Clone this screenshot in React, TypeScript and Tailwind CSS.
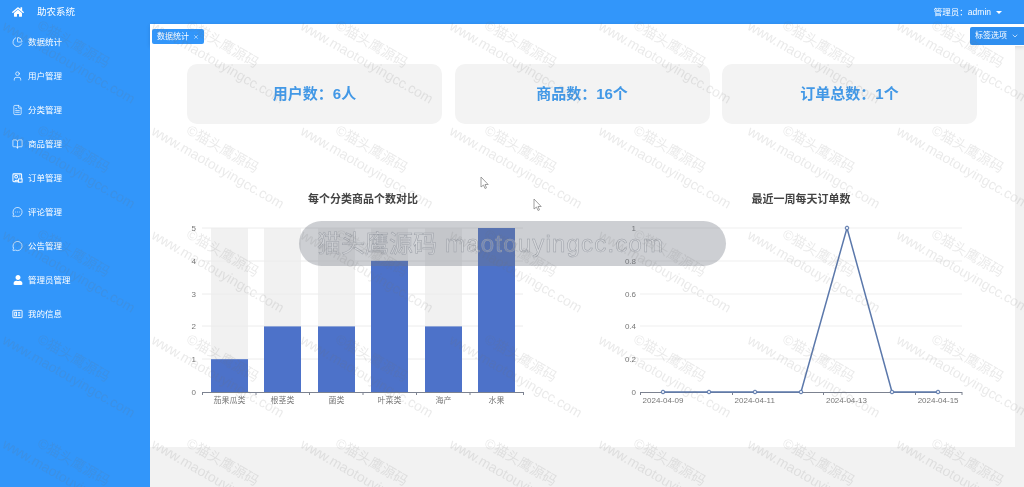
import React from 'react';
import { BookOpen, ChartPie, ChevronDown, FileText, MessageCircle, MessageCircleMore, User, X } from 'lucide-react';
import { FaHome, FaUser } from 'react-icons/fa';

const OrderIcon = () => (
  <svg width="12" height="12" viewBox="0 0 12 12" fill="none" stroke="currentColor" strokeWidth="1.1">
    <rect x="1" y="1.5" width="9.5" height="8.5" rx="1" />
    <circle cx="4.5" cy="4.6" r="1.5" />
    <path d="M3 10c0-1.8 4-2.500 5 0M8 3h1M8 5h1" />
    <rect x="7" y="7" width="4" height="3.500" fill="#3296fa" />
  </svg>
);

const InfoIcon = () => (
  <svg width="12" height="12" viewBox="0 0 12 12" fill="none" stroke="currentColor" strokeWidth="1">
    <rect x="1" y="2" width="10" height="8" rx="0.5" />
    <rect x="3" y="4" width="2" height="4" />
    <path d="M6.500 4.500h2.500M6.500 6h2.500M6.500 7.500h2.500" />
  </svg>
);

const menu = [
  { label: '数据统计', icon: <ChartPie size={12} strokeWidth={1.5} /> },
  { label: '用户管理', icon: <User size={12} strokeWidth={1.5} /> },
  { label: '分类管理', icon: <FileText size={12} strokeWidth={1.5} /> },
  { label: '商品管理', icon: <BookOpen size={12} strokeWidth={1.5} /> },
  { label: '订单管理', icon: <OrderIcon /> },
  { label: '评论管理', icon: <MessageCircleMore size={12} strokeWidth={1.5} /> },
  { label: '公告管理', icon: <MessageCircle size={12} strokeWidth={1.5} /> },
  { label: '管理员管理', icon: <FaUser size={10} /> },
  { label: '我的信息', icon: <InfoIcon /> },
];

const stats = ['用户数：6人', '商品数：16个', '订单总数：1个'];

const bars = [
  { name: '茄果瓜类', value: 1, x: 48 },
  { name: '根茎类', value: 2, x: 101 },
  { name: '菌类', value: 2, x: 155 },
  { name: '叶菜类', value: 4, x: 208 },
  { name: '海产', value: 2, x: 262 },
  { name: '水果', value: 5, x: 315 },
];

const linePoints: [number, number][] = [
  [62, 185],
  [108, 185],
  [154, 185],
  [200, 185],
  [246, 21],
  [291, 185],
  [337, 185],
];

const gridY = [21, 54, 87, 119, 152];

const BarChart = () => (
  <svg width="400" height="210" fontFamily="'Liberation Sans', 'Noto Sans CJK SC', sans-serif" fontSize="8">
    {bars.map((b) => (
      <g key={b.name}>
        <rect x={b.x} y="21" width="37" height="164" fill="#f1f1f1" />
      </g>
    ))}
    {gridY.map((y) => (
      <line key={y} x1="39" x2="360" y1={y} y2={y} stroke="#ececec" />
    ))}
    {bars.map((b) => (
      <g key={b.name}>
        <rect x={b.x} y={185 - b.value * 32.8} width="37" height={b.value * 32.8} fill="#4d72c9" />
        <text x={b.x + 18.5} y="196" textAnchor="middle" fill="#777">{b.name}</text>
      </g>
    ))}
    <line x1="39" x2="360" y1="185.500" y2="185.500" stroke="#7c8290" />
    {[0, 1, 2, 3, 4, 5, 6].map((i) => (
      <line key={i} x1={39.5 + i * 53.5} x2={39.5 + i * 53.5} y1="185" y2="188" stroke="#7c8290" />
    ))}
    {[0, 1, 2, 3, 4, 5].map((v) => (
      <text key={v} x="33" y={188 - v * 32.8} textAnchor="end" fill="#777">{v}</text>
    ))}
  </svg>
);

const LineChart = () => (
  <svg width="400" height="210" fontFamily="'Liberation Sans', 'Noto Sans CJK SC', sans-serif" fontSize="8">
    {gridY.map((y) => (
      <line key={y} x1="39" x2="361" y1={y} y2={y} stroke="#efefef" />
    ))}
    <line x1="39" x2="361" y1="185.500" y2="185.500" stroke="#7c8290" />
    {[39.5, 131.5, 222.5, 314.5, 361].map((x) => (
      <line key={x} x1={x} x2={x} y1="185" y2="188" stroke="#7c8290" />
    ))}
    <polyline points={linePoints.map((p) => p.join(',')).join(' ')} fill="none" stroke="#5b78ab" strokeWidth="1.500" />
    {linePoints.map(([x, y]) => (
      <circle key={x} cx={x} cy={y} r="1.800" fill="#dfe6f3" stroke="#5b78ab" />
    ))}
    {['2024-04-09', '2024-04-11', '2024-04-13', '2024-04-15'].map((d, i) => (
      <text key={d} x={62 + i * 91.7} y="196" textAnchor="middle" fill="#777">{d}</text>
    ))}
    {['0', '0.2', '0.4', '0.6', '0.8', '1'].map((v, i) => (
      <text key={v} x="35" y={188 - i * 32.8} textAnchor="end" fill="#777">{v}</text>
    ))}
  </svg>
);

const Cursor = ({ className }: { className: string }) => (
  <svg className={className} width="10" height="14" viewBox="0 0 10 14" fill="#fff" stroke="#888" strokeWidth="0.8">
    <path d="M1 1v10l2.500-2 1.500 3.500 1.500-.7L5 8.500h3.200z" />
  </svg>
);

const App: React.FC = () => {
  return (
    <div className="relative flex h-screen flex-col overflow-hidden bg-[#f2f2f2] font-['Liberation_Sans','Noto_Sans_CJK_SC',sans-serif] blur-[0.4px]">
      <header className="flex h-6 shrink-0 items-center bg-[#3296fa] pl-[12px] pr-[22px] text-white">
        <FaHome size={12} />
        <span className="ml-[13px] text-[9.5px]">助农系统</span>
        <span className="ml-auto text-[8.5px]">管理员：admin</span>
        <span className="ml-[5px] h-0 w-0 border-x-[3px] border-t-[3px] border-x-transparent border-t-white" />
      </header>

      <div className="flex min-h-0 flex-1">
        <aside className="w-[150px] shrink-0 bg-[#3296fa] pt-px text-white">
          {menu.map((item) => (
            <div key={item.label} className="flex h-[34px] items-center gap-[5px] pl-[12px] text-[8.5px]">
              <span className="flex w-[11px] justify-center">{item.icon}</span>
              <span>{item.label}</span>
            </div>
          ))}
        </aside>

        <main className="min-w-0 flex-1">
          <div className="flex h-[22px] items-start justify-between bg-white pl-[2px] pt-[5px] shadow-[0_1px_4px_rgba(0,0,0,0.12)]">
            <div className="flex h-[15px] w-[52px] items-center justify-center gap-[4px] rounded-[2px] bg-[#3296fa] text-[8px] text-white">
              数据统计
              <X size={6} />
            </div>
            <div className="-mt-[2px] flex h-[18px] w-[54px] items-center justify-center gap-[4px] rounded-tl-[2px] rounded-bl-[2px] bg-[#2f8ff0] text-[8px] text-white">
              标签选项
              <ChevronDown size={8} />
            </div>
          </div>

          <section className="h-[401px] w-[865px] bg-white pt-[18px]">
            <div className="flex gap-[12.5px] pl-[37px]">
              {stats.map((s) => (
                <div key={s} className="flex h-[60px] w-[255px] items-center justify-center rounded-[10px] bg-[#f3f3f3] text-[15px] font-bold text-[#4298e6]">
                  {s}
                </div>
              ))}
            </div>
            <div className="mt-[67px] flex justify-between pl-[13px] pr-[14px]">
              <div className="w-[400px]">
                <h3 className="h-4 text-center text-[11px] leading-4 font-bold text-[#444]">每个分类商品个数对比</h3>
                <BarChart />
              </div>
              <div className="w-[400px]">
                <h3 className="h-4 text-center text-[11px] leading-4 font-bold text-[#444]">最近一周每天订单数</h3>
                <LineChart />
              </div>
            </div>
          </section>
        </main>
      </div>

      <Cursor className="absolute left-[480px] top-[176px]" />
      <Cursor className="absolute left-[533px] top-[198px]" />

      <div className="absolute left-[299px] top-[221px] flex h-[45px] w-[427px] items-center rounded-full bg-[#6f7582]/35 pl-[18px] text-[24px] text-white/15 [-webkit-text-stroke:0.5px_#9a9ea6]">
        猫头鹰源码<span className="ml-[8px] tracking-[1.2px]">maotouyingcc.com</span>
      </div>

      <div className="pointer-events-none absolute inset-0 grid grid-cols-[repeat(7,149px)] auto-rows-[104.5px] text-[14px] text-[#707070]/15">
        {Array.from({ length: 35 }, (_, i) => (
          <div key={i} className="relative">
            <span className="absolute left-[9px] top-[16px] origin-top-left rotate-[30deg] whitespace-nowrap">www.maotouyingcc.com</span>
            <span className="absolute left-[44px] top-[15px] origin-top-left rotate-[30deg] whitespace-nowrap">©猫头鹰源码</span>
          </div>
        ))}
      </div>
    </div>
  );
};

export default App;
